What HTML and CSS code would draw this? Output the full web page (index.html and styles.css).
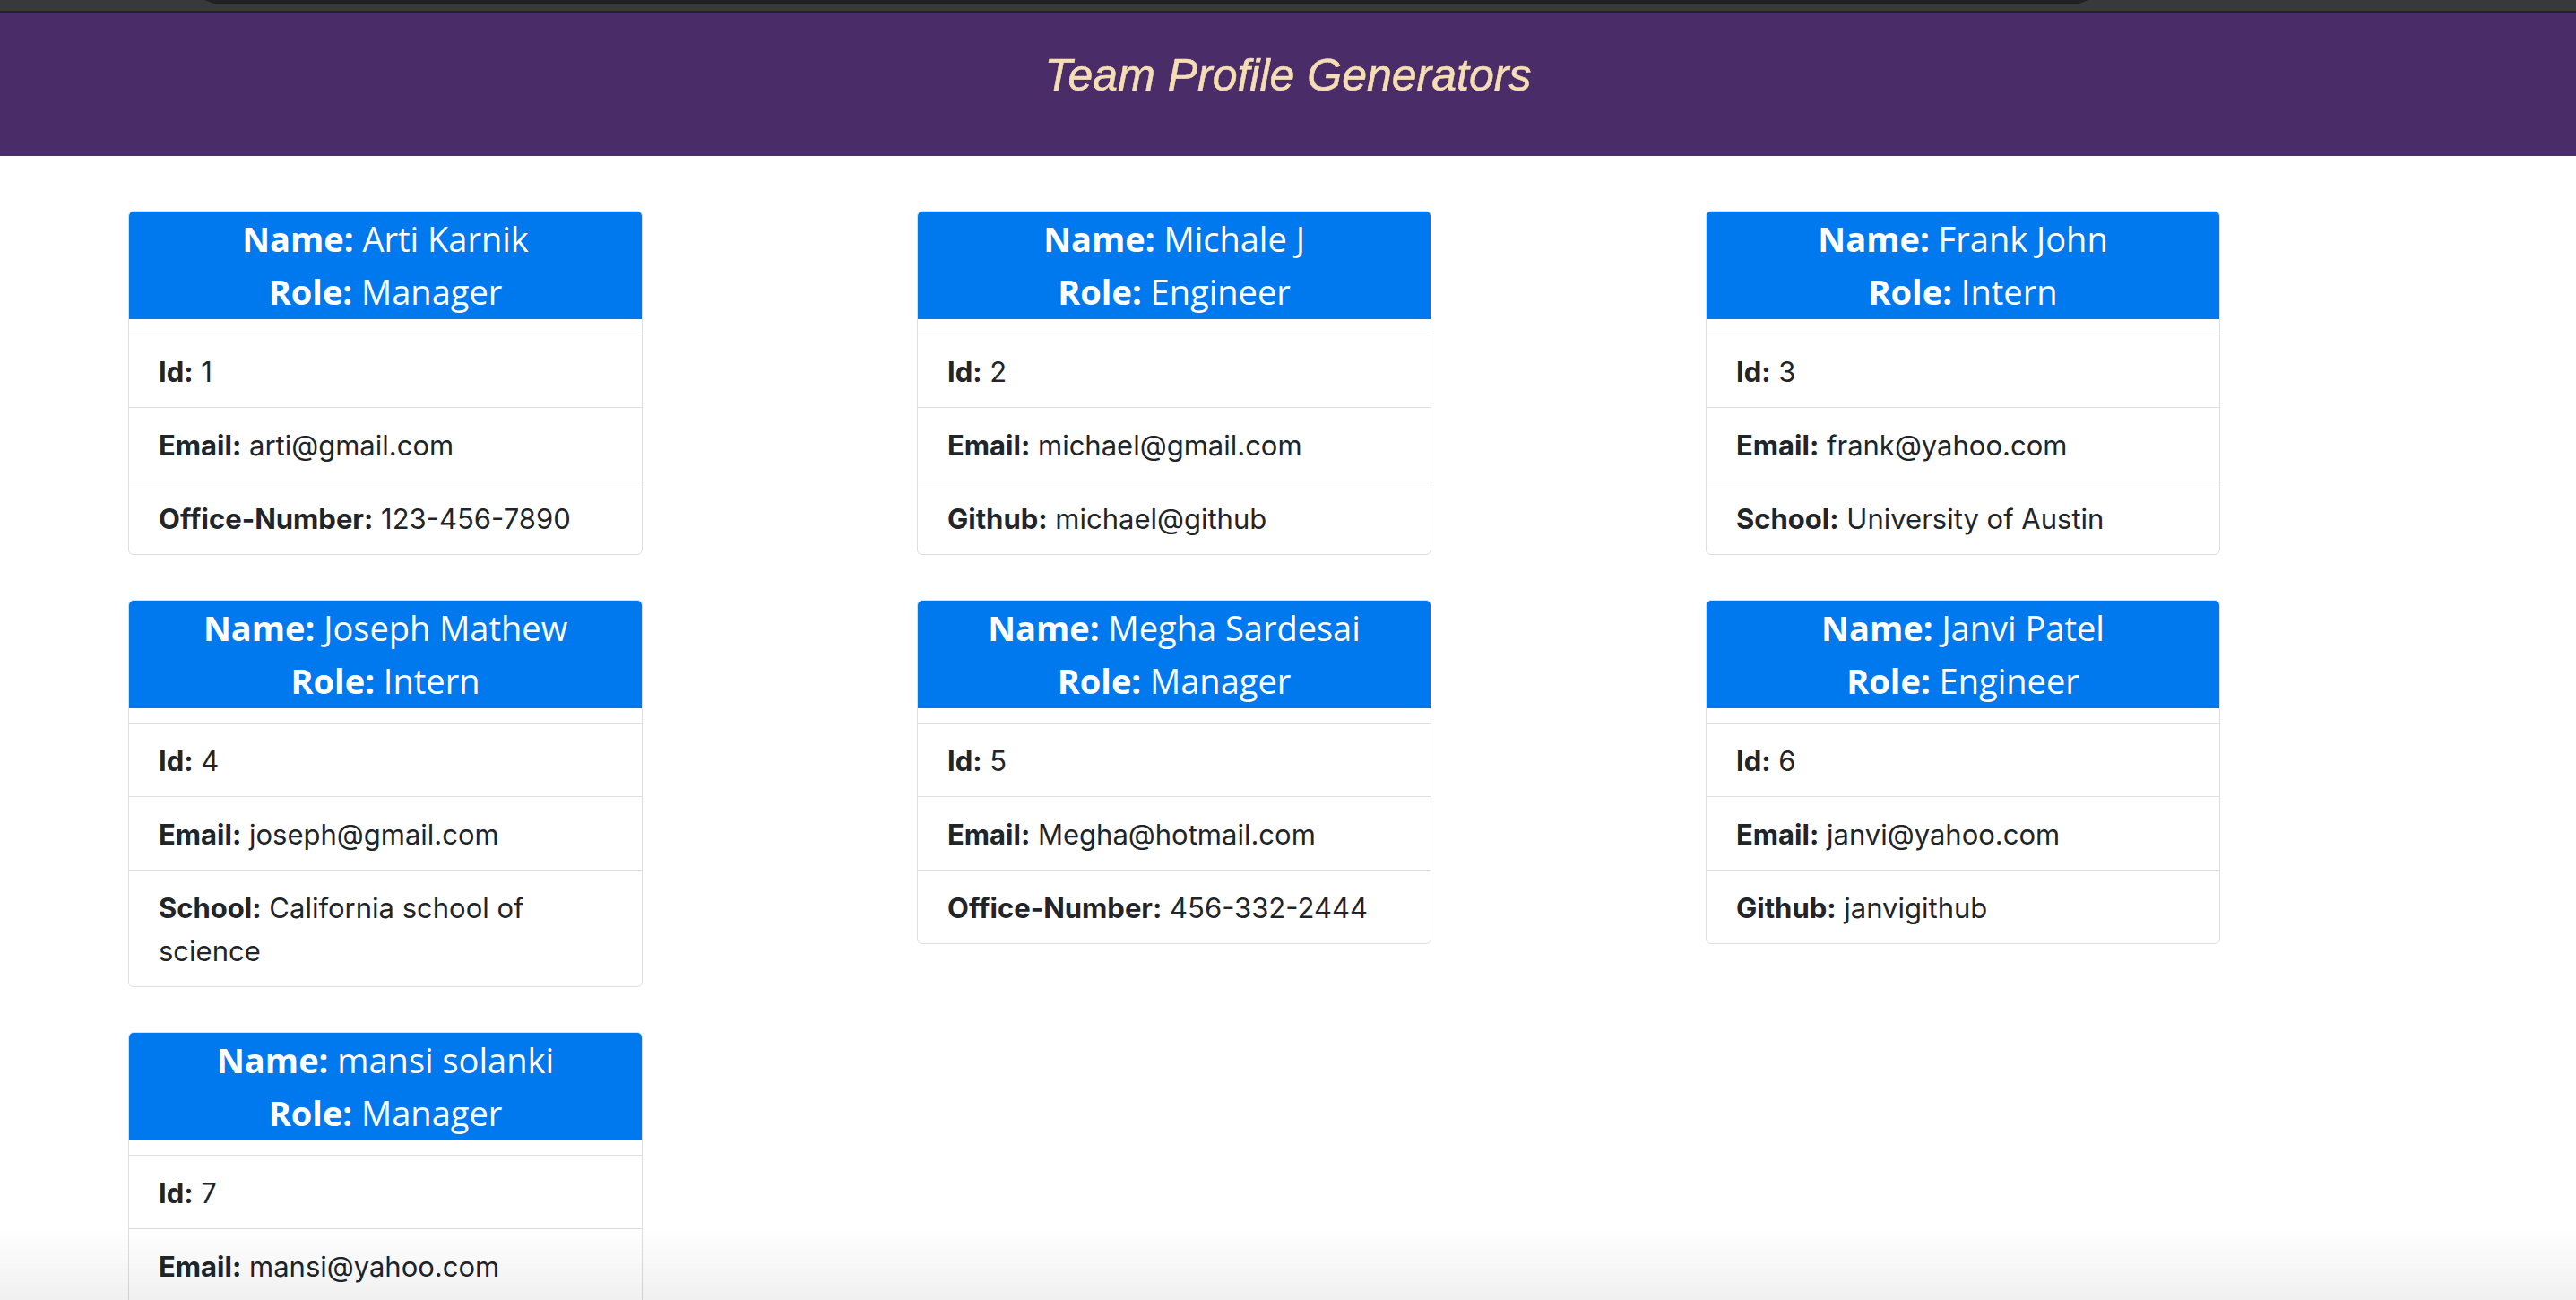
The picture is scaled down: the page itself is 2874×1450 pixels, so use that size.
FILE: index.html
```html
<!DOCTYPE html>
<html lang="en">
<head>
<meta charset="utf-8">
<title>Team Profile Generators</title>
<link rel="stylesheet" href="styles.css">
</head>
<body>
<div class="chrome"><div class="chrome-tab"></div></div>
<header class="banner">
  <h1 class="banner-title">Team Profile Generators</h1>
</header>
<main class="team">
  <section class="card">
    <div class="card-header">
      <div class="card-line"><b>Name:</b> Arti Karnik</div>
      <div class="card-line"><b>Role:</b> Manager</div>
    </div>
    <ul class="card-list">
      <li class="card-item"><strong>Id:</strong> 1</li>
      <li class="card-item"><strong>Email:</strong> arti@gmail.com</li>
      <li class="card-item"><strong>Office-Number:</strong> 123-456-7890</li>
    </ul>
  </section>
  <section class="card">
    <div class="card-header">
      <div class="card-line"><b>Name:</b> Michale J</div>
      <div class="card-line"><b>Role:</b> Engineer</div>
    </div>
    <ul class="card-list">
      <li class="card-item"><strong>Id:</strong> 2</li>
      <li class="card-item"><strong>Email:</strong> michael@gmail.com</li>
      <li class="card-item"><strong>Github:</strong> michael@github</li>
    </ul>
  </section>
  <section class="card">
    <div class="card-header">
      <div class="card-line"><b>Name:</b> Frank John</div>
      <div class="card-line"><b>Role:</b> Intern</div>
    </div>
    <ul class="card-list">
      <li class="card-item"><strong>Id:</strong> 3</li>
      <li class="card-item"><strong>Email:</strong> frank@yahoo.com</li>
      <li class="card-item"><strong>School:</strong> University of Austin</li>
    </ul>
  </section>
  <section class="card">
    <div class="card-header">
      <div class="card-line"><b>Name:</b> Joseph Mathew</div>
      <div class="card-line"><b>Role:</b> Intern</div>
    </div>
    <ul class="card-list">
      <li class="card-item"><strong>Id:</strong> 4</li>
      <li class="card-item"><strong>Email:</strong> joseph@gmail.com</li>
      <li class="card-item"><strong>School:</strong> California school of science</li>
    </ul>
  </section>
  <section class="card">
    <div class="card-header">
      <div class="card-line"><b>Name:</b> Megha Sardesai</div>
      <div class="card-line"><b>Role:</b> Manager</div>
    </div>
    <ul class="card-list">
      <li class="card-item"><strong>Id:</strong> 5</li>
      <li class="card-item"><strong>Email:</strong> Megha@hotmail.com</li>
      <li class="card-item"><strong>Office-Number:</strong> 456-332-2444</li>
    </ul>
  </section>
  <section class="card">
    <div class="card-header">
      <div class="card-line"><b>Name:</b> Janvi Patel</div>
      <div class="card-line"><b>Role:</b> Engineer</div>
    </div>
    <ul class="card-list">
      <li class="card-item"><strong>Id:</strong> 6</li>
      <li class="card-item"><strong>Email:</strong> janvi@yahoo.com</li>
      <li class="card-item"><strong>Github:</strong> janvigithub</li>
    </ul>
  </section>
  <section class="card">
    <div class="card-header">
      <div class="card-line"><b>Name:</b> mansi solanki</div>
      <div class="card-line"><b>Role:</b> Manager</div>
    </div>
    <ul class="card-list">
      <li class="card-item"><strong>Id:</strong> 7</li>
      <li class="card-item"><strong>Email:</strong> mansi@yahoo.com</li>
      <li class="card-item"><strong>Office-Number:</strong> 123-456-7890</li>
    </ul>
  </section>
</main>
<div class="bottom-fade"></div>
</body>
</html>
```

FILE: styles.css
```css
* { box-sizing: border-box; }

html, body {
  margin: 0;
  padding: 0;
  background: #ffffff;
}

body {
  font-family: Inter, "Noto Sans", "Liberation Sans", sans-serif;
  color: #212529;
}

.chrome {
  height: 14px;
  background: #37393b;
  border-bottom: 2px solid #222326;
  padding: 0 544px 0 228px;
}

.chrome-tab {
  height: 4px;
  background: #202125;
  clip-path: polygon(0 0, 100% 0, 99.5% 100%, 0.5% 100%);
}

.banner {
  height: 160px;
  background: #4a2c69;
  display: flex;
  align-items: center;
  justify-content: center;
  padding-bottom: 20px;
}

.banner-title {
  margin: 0;
  font-family: "Liberation Sans", Arial, sans-serif;
  font-style: italic;
  font-weight: 400;
  font-size: 50px;
  line-height: 56px;
  color: #f5deb3;
  -webkit-text-stroke: 0.6px #f5deb3;
}

.team {
  display: grid;
  grid-template-columns: repeat(3, 574px);
  column-gap: 306px;
  row-gap: 50px;
  align-items: start;
  padding: 61px 0 0 143px;
}

.card {
  border: 1px solid #dfdfdf;
  border-radius: 6px;
  overflow: hidden;
  background: #fff;
}

.card-header {
  height: 120px;
  background: #0179ee;
  color: #fff;
  text-align: center;
  font-family: "Open Sans", "Noto Sans", sans-serif;
  font-size: 38px;
  line-height: 59px;
  padding-top: 1px;
}

.card-line b { font-weight: 700; }

.card-list {
  list-style: none;
  margin: 16px 0 0;
  padding: 0;
}

.card-item {
  border-top: 1px solid #dfdfdf;
  padding: 18px 32px 15px 33px;
  font-size: 31px;
  line-height: 48px;
}

.card-item strong { font-weight: 700; }

.bottom-fade {
  position: fixed;
  left: 0;
  right: 0;
  bottom: 0;
  height: 80px;
  pointer-events: none;
  background: linear-gradient(to bottom, rgba(0,0,0,0), rgba(0,0,0,0.06));
}
```
